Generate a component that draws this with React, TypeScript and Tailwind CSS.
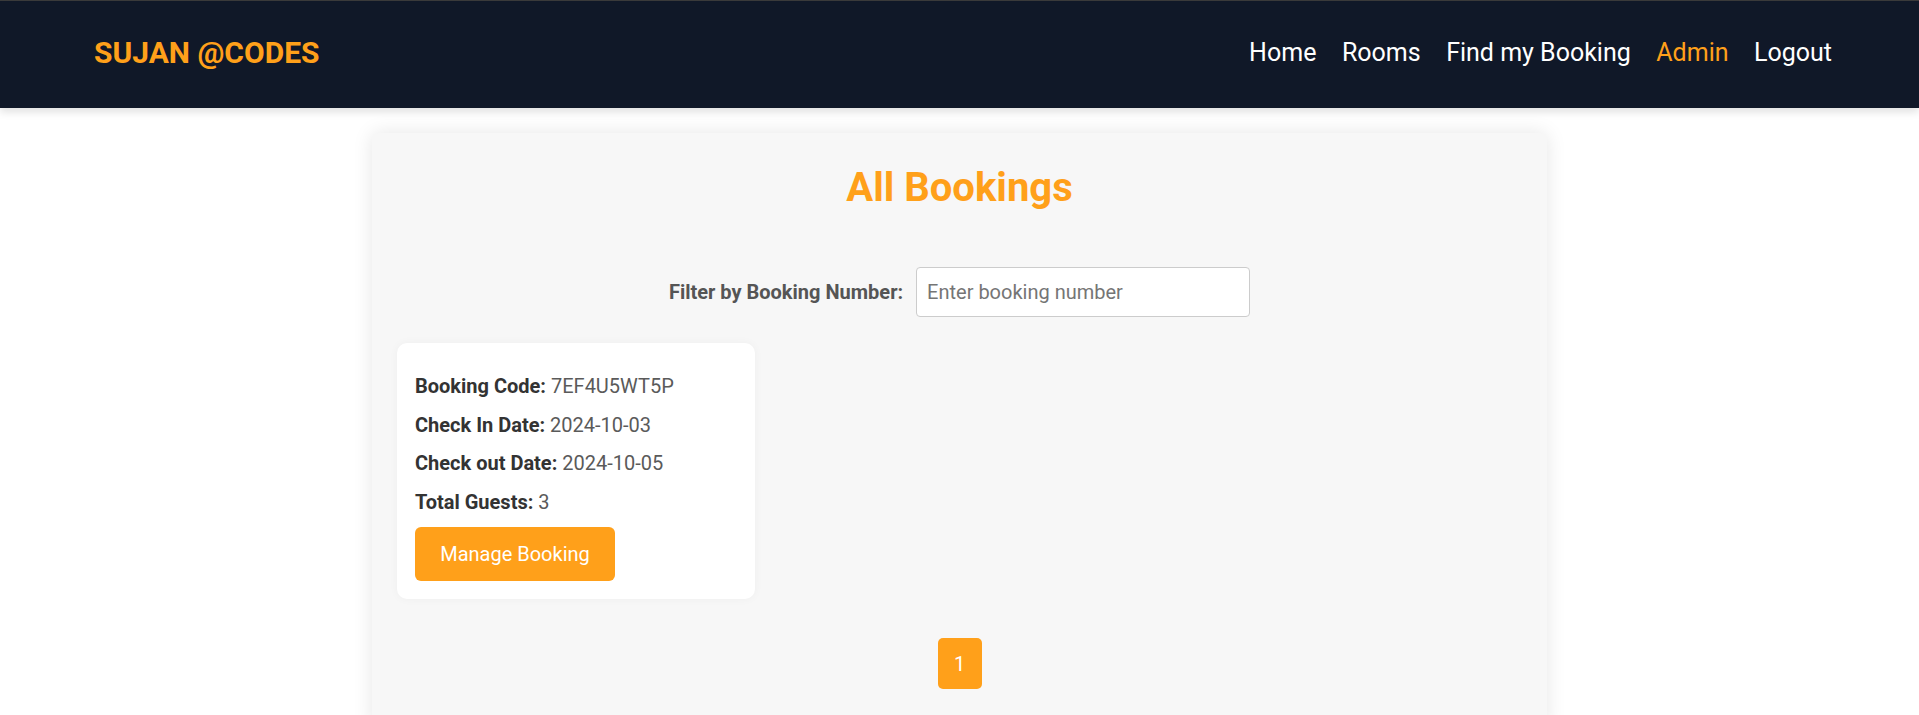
import { useState } from "react";

type Booking = {
  code: string;
  checkIn: string;
  checkOut: string;
  guests: number;
};

const bookings: Booking[] = [
  {
    code: "7EF4U5WT5P",
    checkIn: "2024-10-03",
    checkOut: "2024-10-05",
    guests: 3,
  },
];

const Links = [
  { label: "Home", active: false },
  { label: "Rooms", active: false },
  { label: "Find my Booking", active: false },
  { label: "Admin", active: true },
  { label: "Logout", active: false },
];

const Navbar = () => {
  return (
    <nav className="relative z-10 flex h-[108px] items-center justify-between border-t border-[#3a3a3a] bg-[#101828] pb-[4px] pl-[94px] pr-[87px] shadow-[0_4px_8px_rgba(0,0,0,0.12)]">
      <div className="text-[30px] font-bold text-[#ffa01a]">SUJAN @CODES</div>
      <ul className="flex items-center gap-[25.5px]">
        {Links.map((link) => (
          <li key={link.label}>
            <a
              className={
                link.active
                  ? "text-[25px] text-[#ffa01a] cursor-pointer"
                  : "text-[25px] text-white cursor-pointer"
              }
            >
              {link.label}
            </a>
          </li>
        ))}
      </ul>
    </nav>
  );
};

const BookingCard = ({ booking }: { booking: Booking }) => {
  return (
    <div className="flex w-[358px] flex-col rounded-[10px] bg-white px-[18px] pb-[18px] pt-[29px] shadow-[0_0_10px_rgba(0,0,0,0.04)]">
      <div className="flex flex-col gap-[10.5px] text-[20px] leading-[28px]">
        <p className="text-[#5a5a5a]">
          <span className="font-bold text-[#333]">Booking Code:</span>{" "}
          {booking.code}
        </p>
        <p className="text-[#5a5a5a]">
          <span className="font-bold text-[#333]">Check In Date:</span>{" "}
          {booking.checkIn}
        </p>
        <p className="text-[#5a5a5a]">
          <span className="font-bold text-[#333]">Check out Date:</span>{" "}
          {booking.checkOut}
        </p>
        <p className="text-[#5a5a5a]">
          <span className="font-bold text-[#333]">Total Guests:</span>{" "}
          {booking.guests}
        </p>
      </div>
      <button className="mt-[11.5px] h-[54px] w-[200px] rounded-[6px] bg-[#ffa01a] text-[20px] text-white">
        Manage Booking
      </button>
    </div>
  );
};

export default function App() {
  const [search, setSearch] = useState("");
  const filtered = bookings.filter((b) =>
    b.code.toLowerCase().includes(search.toLowerCase())
  );

  return (
    <div className="min-h-screen bg-white font-['Roboto',sans-serif]">
      <Navbar />
      <main className="pt-[25px]">
        <div className="mx-auto w-[1175px] rounded-[6px] bg-[#f7f7f7] px-[25px] pb-[40px] pt-[31px] shadow-[0_0_20px_rgba(0,0,0,0.1)]">
          <h2 className="text-center text-[40px] font-bold leading-[48px] text-[#ffa01a]">
            All Bookings
          </h2>
          <div className="mt-[55px] flex items-center justify-center gap-[13px]">
            <label className="text-[20px] font-bold text-[#555]">
              Filter by Booking Number:
            </label>
            <input
              type="text"
              value={search}
              onChange={(e) => setSearch(e.target.value)}
              placeholder="Enter booking number"
              className="h-[50px] w-[334px] rounded-[4px] border border-[#ccc] bg-white px-[10px] text-[20px] text-[#333] outline-none placeholder:text-[#757575]"
            />
          </div>
          <div className="mt-[26px] flex flex-wrap gap-[20px]">
            {filtered.map((b) => (
              <BookingCard key={b.code} booking={b} />
            ))}
          </div>
          <div className="mt-[39px] flex justify-center">
            <button className="h-[51px] w-[44px] rounded-[5px] bg-[#ffa01a] text-[20px] text-white">
              1
            </button>
          </div>
        </div>
      </main>
    </div>
  );
}
